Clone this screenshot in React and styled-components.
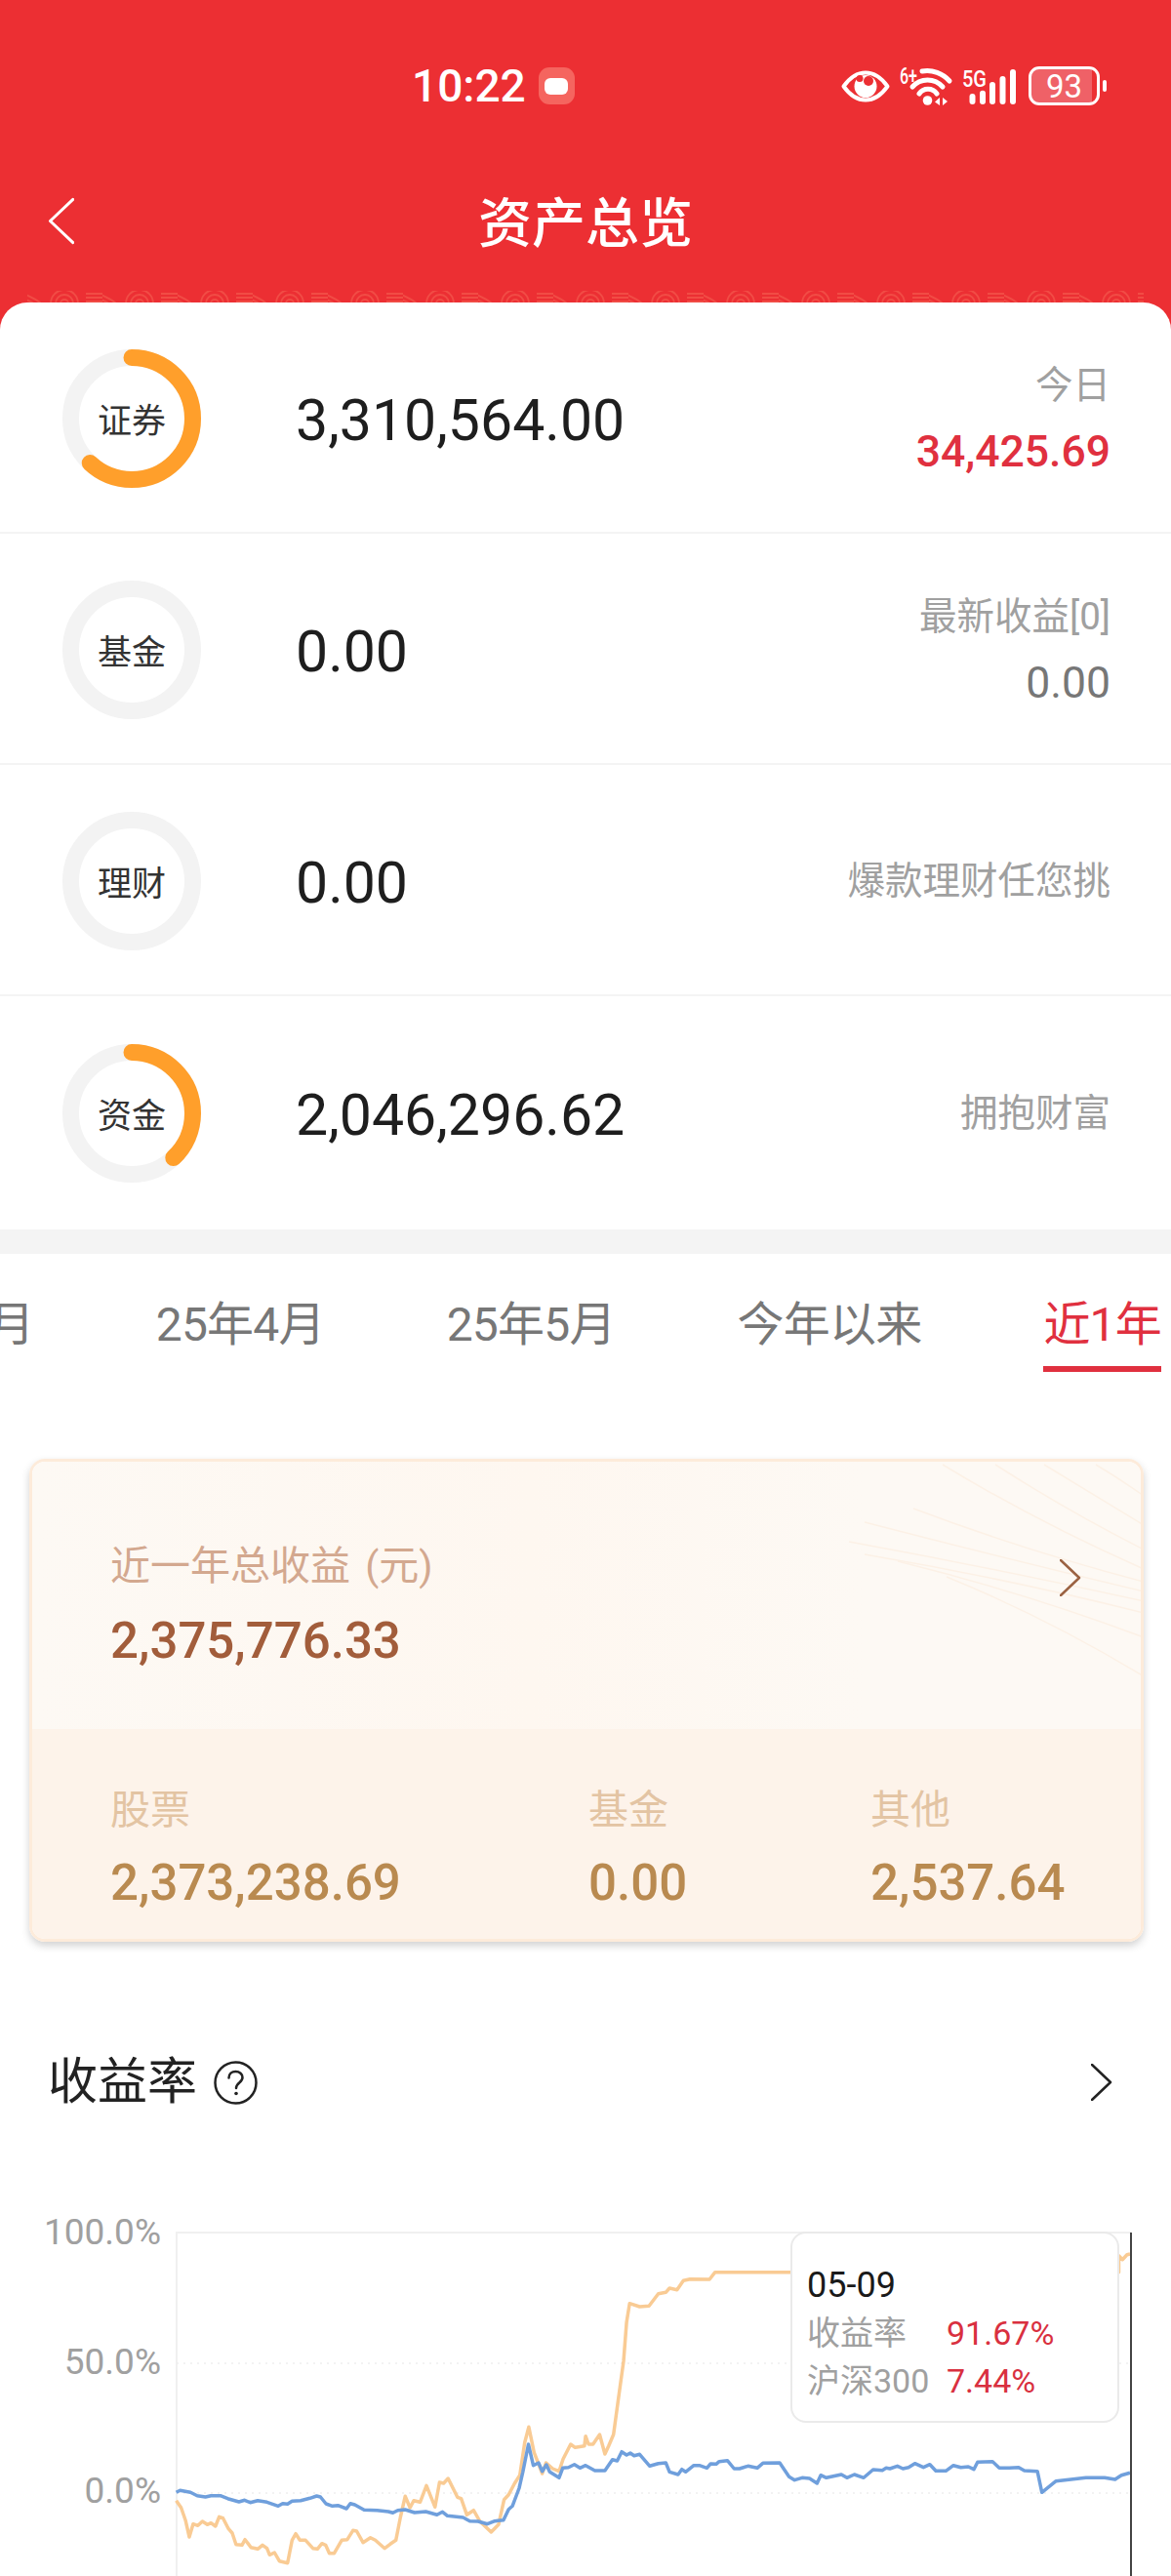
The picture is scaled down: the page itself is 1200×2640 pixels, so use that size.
import React from "react";
import styled, { createGlobalStyle } from "styled-components";

const FONT = `Roboto, "Noto Sans CJK SC", sans-serif`;

const ASSETS = [
  { name: "证券", value: "3,310,564.00", share: 62, label: "今日", amount: "34,425.69", up: true },
  { name: "基金", value: "0.00", share: 0, label: "最新收益[0]", amount: "0.00" },
  { name: "理财", value: "0.00", share: 0, label: "爆款理财任您挑" },
  { name: "资金", value: "2,046,296.62", share: 38, label: "拥抱财富" },
];

const TABS = ["25年3月", "25年4月", "25年5月", "今年以来", "近1年"];

const SPLITS = [
  { name: "股票", value: "2,373,238.69" },
  { name: "基金", value: "0.00" },
  { name: "其他", value: "2,537.64" },
];

const FAN_LINES = [
  "M1090 3Q1115 18 1139 35",
  "M1037 3Q1090 35 1139 65",
  "M987 3Q1060 50 1139 90",
  "M933 3Q1030 62 1139 110",
  "M903 48Q1020 92 1139 123",
  "M853 62Q1000 100 1139 133",
  "M837 82Q990 110 1139 143",
  "M853 95Q1000 120 1139 155",
  "M887 102Q1020 135 1139 180",
  "M937 118Q1040 160 1139 220",
];

// traced in zoom space: left half is 2.613x from x=0, right half 2.613x from x=600, y is 3x from 2220
const fromLeft = (pts) => pts.map(([x, y]) => `${(x / 2.613).toFixed(1)},${(2220 + y / 3).toFixed(1)}`);
const fromRight = (pts) => pts.map(([x, y]) => `${(600 + x / 2.613).toFixed(1)},${(2220 + y / 3).toFixed(1)}`);

const BLUE_LINE = [
  ...fromLeft([
    [472, 1003], [482, 997], [510, 1003], [528, 1013], [550, 1017], [565, 1013], [590, 1013], [610, 1022],
    [640, 1032], [655, 1027], [670, 1034], [690, 1028], [715, 1033], [745, 1045], [757, 1037], [770, 1039],
    [782, 1030], [805, 1028], [830, 1021], [848, 1014], [858, 1017], [873, 1038], [890, 1045], [905, 1043],
    [928, 1053], [938, 1037], [950, 1041], [975, 1057], [1010, 1058], [1040, 1062], [1052, 1066], [1065, 1058],
    [1085, 1056], [1110, 1065], [1140, 1062], [1170, 1072], [1185, 1063], [1198, 1075], [1240, 1080], [1258, 1091],
    [1280, 1092], [1305, 1100], [1325, 1091], [1348, 1088], [1362, 1055], [1372, 1045], [1390, 990], [1400, 940],
    [1415, 855], [1428, 920], [1442, 912], [1452, 938], [1463, 918], [1472, 940], [1497, 958], [1507, 928],
    [1522, 926], [1538, 917], [1553, 928], [1568, 920],
  ]),
  ...fromRight([
    [25, 936], [52, 936], [72, 902], [85, 906], [97, 878], [110, 888], [120, 882], [130, 890], [145, 886],
    [172, 922], [195, 914], [215, 912], [225, 940], [248, 948], [258, 932], [268, 940], [290, 920], [305, 920],
    [325, 928], [335, 915], [350, 916], [358, 908], [380, 905], [398, 930], [412, 930], [435, 922], [460, 928],
    [475, 913], [520, 912], [545, 955], [560, 965], [580, 958], [600, 960], [620, 975], [630, 950], [645, 958],
    [685, 948], [700, 958], [720, 948], [745, 958], [770, 933], [795, 935], [805, 928], [815, 930], [835, 922],
    [850, 930], [865, 926], [882, 914], [905, 926], [922, 917], [938, 937], [965, 937], [985, 920], [1005, 926],
    [1025, 924], [1040, 932], [1050, 910], [1090, 908], [1108, 928], [1135, 928], [1160, 926], [1175, 936],
    [1210, 938], [1222, 1003], [1260, 968], [1300, 963], [1340, 958], [1390, 958], [1418, 963], [1435, 950], [1458, 943],
  ]),
].join(" ");

const ORANGE_LINE = [
  ...fromLeft([
    [472, 1028], [485, 1050], [497, 1090], [507, 1140], [517, 1100], [530, 1105], [542, 1092], [555, 1102],
    [565, 1097], [577, 1107], [587, 1078], [597, 1082], [612, 1115], [622, 1128], [632, 1163], [648, 1165],
    [656, 1148], [672, 1172], [690, 1177], [703, 1165], [715, 1175], [722, 1195], [735, 1188], [748, 1214],
    [770, 1220], [782, 1150], [792, 1130], [803, 1150], [818, 1150], [838, 1175], [850, 1177], [862, 1160],
    [872, 1165], [882, 1190], [895, 1190], [915, 1150], [930, 1148], [945, 1120], [955, 1122], [972, 1157],
    [992, 1142], [1005, 1150], [1030, 1175], [1045, 1162], [1060, 1150], [1072, 1080], [1085, 1015], [1098, 1050],
    [1108, 1028], [1125, 1033], [1142, 982], [1165, 1048], [1177, 972], [1188, 975], [1200, 960], [1225, 1018],
    [1235, 1022], [1250, 1072], [1268, 1058], [1285, 1092], [1315, 1125], [1335, 1102], [1350, 1025], [1362, 1010],
    [1378, 975], [1392, 950], [1405, 850], [1416, 802], [1430, 880], [1452, 945], [1462, 912], [1480, 930],
    [1497, 938], [1508, 900], [1528, 855], [1540, 865], [1565, 860], [1568, 830],
  ]),
  ...fromRight([
    [8, 855], [20, 855], [38, 825], [52, 885], [62, 860], [75, 825], [90, 700], [102, 600], [110, 480], [118, 422],
    [145, 432], [170, 430], [195, 392], [215, 388], [225, 375], [245, 380], [262, 352], [280, 347], [332, 348],
    [347, 326], [1428, 326], [1428, 275], [1438, 287], [1450, 272], [1458, 270],
  ]),
].join(" ");

const Ring = ({ name, share }) => (
  <StyledRing>
    <svg width="142" height="142" viewBox="0 0 142 142">
      <circle cx="71" cy="71" r="62.5" fill="none" stroke="#F3F3F3" strokeWidth="17" />
      {share > 0 && (
        <circle
          cx="71"
          cy="71"
          r="62.5"
          fill="none"
          stroke="#FF9F2B"
          strokeWidth="17"
          strokeLinecap="round"
          pathLength="100"
          strokeDasharray={`${share} 100`}
          transform="rotate(-90 71 71)"
        />
      )}
    </svg>
    <StyledRingName>{name}</StyledRingName>
  </StyledRing>
);

const Chevron = ({ left, color, width = 22, height = 38, stroke = 3 }) => (
  <svg width={width} height={height} viewBox="0 0 22 38" fill="none">
    <path
      d={left ? "M21 1L2 19l19 18" : "M1 1l19 18L1 37"}
      stroke={color}
      strokeWidth={stroke}
      strokeLinecap="round"
      strokeLinejoin="round"
      vectorEffect="non-scaling-stroke"
    />
  </svg>
);

const EyeIcon = () => (
  <svg width="50" height="33" viewBox="0 0 50 33">
    <path
      d="M2.5 16.5C10 6 18 2.5 25 2.5S40 6 47.5 16.5C40 27 32 30.5 25 30.5S10 27 2.5 16.5Z"
      fill="none"
      stroke="#fff"
      strokeWidth="4"
      strokeLinejoin="round"
    />
    <circle cx="25" cy="16.5" r="11.5" fill="#fff" />
    <circle cx="28" cy="11" r="5" fill="#EC2F33" />
    <circle cx="19" cy="8.5" r="3.5" fill="#EC2F33" />
  </svg>
);

const NetworkIcon = () => (
  <svg width="125" height="50" viewBox="0 0 125 50" fill="#fff">
    <StyledNetText x="2" y="23" fontSize="23" textLength="18" lengthAdjust="spacingAndGlyphs">
      6+
    </StyledNetText>
    <StyledNetText x="66" y="26" fontSize="24" textLength="25" lengthAdjust="spacingAndGlyphs">
      5G
    </StyledNetText>
    <g fill="none" stroke="#fff" strokeWidth="5" strokeLinecap="round">
      <path d="M25 10A30.4 30.4 0 0 1 53 20" />
      <path d="M15 26A20.5 20.5 0 0 1 46 26" />
      <path d="M22 33A11 11 0 0 1 40 33" />
    </g>
    <circle cx="30.5" cy="40" r="4.8" />
    <path d="M38 41.5L43 37V45ZM46 37L51 41L46 45Z" />
    <rect x="73.5" y="33" width="6" height="11" rx="3" />
    <rect x="84" y="29.7" width="6" height="14.3" rx="3" />
    <rect x="94" y="21" width="6" height="23" rx="3" />
    <rect x="104.5" y="15" width="6" height="29" rx="3" />
    <rect x="115" y="8" width="6" height="36" rx="3" />
  </svg>
);

const HelpIcon = () => (
  <svg width="45" height="45" viewBox="0 0 45 45" fill="none">
    <circle cx="22.5" cy="22.5" r="21" stroke="#222" strokeWidth="2.5" />
    <path
      d="M15.5 17.5c0-4 3-6.5 7-6.5s7 2.600 7 6c0 5.500-6.500 5.500-6.500 11"
      stroke="#222"
      strokeWidth="2.5"
      strokeLinecap="round"
    />
    <circle cx="23" cy="33.500" r="1.800" fill="#222" />
  </svg>
);

const PatternStrip = () => (
  <StyledStrip width="1144" height="12" viewBox="0 0 1144 12">
    <defs>
      <pattern id="cloud" width="77" height="24" patternUnits="userSpaceOnUse">
        <g fill="none" stroke="#F14C45" strokeWidth="1.8">
          <circle cx="38" cy="13" r="4" />
          <circle cx="38" cy="13" r="9" />
          <circle cx="38" cy="13" r="14" />
          <path d="M-2 4Q8 8 14 13M-2 9Q4 11 8 14M60 3H78M60 7H78M60 11H78" />
        </g>
      </pattern>
    </defs>
    <rect width="1144" height="12" fill="url(#cloud)" />
  </StyledStrip>
);

const App = () => (
  <StyledPage>
    <GlobalStyle />
    <StyledHeader>
      <StyledStatusBar>
        <StyledTime>10:22</StyledTime>
        <StyledRecBadge>
          <StyledRecDot />
        </StyledRecBadge>
        <StyledStatusIcons>
          <EyeIcon />
          <NetworkIcon />
          <StyledBattery>93</StyledBattery>
          <StyledBatteryNub />
        </StyledStatusIcons>
      </StyledStatusBar>
      <StyledNav>
        <Chevron left color="#fff" width={27} height={53} stroke={3} />
        <StyledTitle>资产总览</StyledTitle>
      </StyledNav>
      <PatternStrip />
    </StyledHeader>

    <StyledAssetList>
      {ASSETS.map((asset) => (
        <StyledAssetRow key={asset.name}>
          <Ring name={asset.name} share={asset.share} />
          <StyledAssetValue>{asset.value}</StyledAssetValue>
          <StyledAssetSide>
            <StyledSideLabel>{asset.label}</StyledSideLabel>
            {asset.amount && <StyledSideAmount $up={asset.up}>{asset.amount}</StyledSideAmount>}
          </StyledAssetSide>
        </StyledAssetRow>
      ))}
    </StyledAssetList>
    <StyledBand />

    <StyledTabs>
      {TABS.map((tab, i) => (
        <StyledTab key={tab} $active={i === TABS.length - 1}>
          {tab}
        </StyledTab>
      ))}
    </StyledTabs>

    <StyledProfitCard>
      <StyledProfitTop>
        <StyledFan viewBox="0 0 1136 272" width="1136" height="272" fill="none">
          {FAN_LINES.map((d) => (
            <path key={d} d={d} stroke="#FCF1E6" strokeWidth="1.5" />
          ))}
        </StyledFan>
        <StyledProfitHead>
          <StyledProfitLabel>近一年总收益 (元)</StyledProfitLabel>
          <StyledProfitValue>2,375,776.33</StyledProfitValue>
        </StyledProfitHead>
        <StyledProfitArrow>
          <Chevron color="#9B6242" stroke={2.5} />
        </StyledProfitArrow>
      </StyledProfitTop>
      <StyledProfitSplit>
        {SPLITS.map((item) => (
          <div key={item.name}>
            <StyledSplitLabel>{item.name}</StyledSplitLabel>
            <StyledSplitValue>{item.value}</StyledSplitValue>
          </div>
        ))}
      </StyledProfitSplit>
    </StyledProfitCard>

    <StyledSectionHead>
      <StyledSectionTitle>收益率</StyledSectionTitle>
      <HelpIcon />
      <StyledSectionArrow>
        <Chevron color="#222" stroke={2.5} />
      </StyledSectionArrow>
    </StyledSectionHead>

    <StyledChart>
      <svg width="1200" height="471" viewBox="0 2169 1200 471" fill="none">
        <path d="M181 2640V2288H1159" stroke="#F0F0F0" strokeWidth="2" />
        <path d="M181 2422H1159M181 2555H1159" stroke="#EEE" strokeWidth="1.500" strokeDasharray="2 5" />
        <StyledAxisText x="165" y="2300">100.0%</StyledAxisText>
        <StyledAxisText x="165" y="2433">50.0%</StyledAxisText>
        <StyledAxisText x="165" y="2565">0.0%</StyledAxisText>
        <polyline points={ORANGE_LINE} stroke="#F9CB94" strokeWidth="3.5" strokeLinejoin="round" />
        <polyline points={BLUE_LINE} stroke="#6F9FDC" strokeWidth="3.5" strokeLinejoin="round" />
        <path d="M1159 2288V2640" stroke="#444" strokeWidth="2" />
      </svg>
      <StyledTooltip>
        <StyledTipDate>05-09</StyledTipDate>
        <StyledTipRow>
          <StyledTipName>收益率</StyledTipName>
          <StyledTipValue>91.67%</StyledTipValue>
        </StyledTipRow>
        <StyledTipRow>
          <StyledTipName>沪深300</StyledTipName>
          <StyledTipValue>7.44%</StyledTipValue>
        </StyledTipRow>
      </StyledTooltip>
    </StyledChart>
  </StyledPage>
);

export default App;

const GlobalStyle = createGlobalStyle`
  body {
    margin: 0;
    background: #fff;
    font-family: ${FONT};
  }
`;

const StyledPage = styled.div`
  width: 1200px;
  height: 2640px;
  overflow: hidden;
  background: #fff;
`;

const StyledHeader = styled.header`
  display: flex;
  flex-direction: column;
  height: 340px;
  padding-top: 60px;
  box-sizing: border-box;
  background: #ec2f33;
  color: #fff;
`;

const StyledStatusBar = styled.div`
  display: flex;
  align-items: center;
  height: 56px;
  padding: 0 66px 0 422px;
`;

const StyledTime = styled.span`
  font-size: 46px;
  font-weight: 500;
  line-height: 56px;
`;

const StyledRecBadge = styled.span`
  display: flex;
  align-items: center;
  justify-content: center;
  width: 37px;
  height: 38px;
  margin-left: 13px;
  border-radius: 11px;
  background: #f5655f;
`;

const StyledRecDot = styled.span`
  width: 24px;
  height: 17px;
  border-radius: 6px;
  background: #fff;
`;

const StyledStatusIcons = styled.div`
  display: flex;
  align-items: center;
  gap: 8px;
  margin-left: auto;
`;

const StyledNetText = styled.text`
  font-family: Roboto, sans-serif;
  font-weight: 500;
`;

const StyledBattery = styled.div`
  display: flex;
  align-items: center;
  justify-content: center;
  width: 73px;
  height: 40px;
  margin-left: 1px;
  box-sizing: border-box;
  border: 3px solid #fff;
  border-radius: 11px;
  background: linear-gradient(90deg, #ef6167 93%, transparent 93%);
  font-size: 33px;
  line-height: 1;
`;

const StyledBatteryNub = styled.span`
  width: 4px;
  height: 12px;
  margin-left: -5px;
  border-radius: 2px;
  background: #fff;
`;

const StyledNav = styled.div`
  position: relative;
  display: flex;
  align-items: center;
  height: 70px;
  margin-top: 75px;
  padding-left: 49px;
`;

const StyledTitle = styled.h1`
  position: absolute;
  left: 0;
  right: 0;
  top: 3px;
  margin: 0;
  font-size: 55px;
  font-weight: 500;
  line-height: 70px;
  text-align: center;
`;

const StyledStrip = styled.svg`
  display: block;
  margin: 37px 0 0 28px;
`;

const StyledAssetList = styled.section`
  margin-top: -30px;
  border-radius: 28px 28px 0 0;
  background: #fff;
`;

const StyledAssetRow = styled.div`
  display: flex;
  align-items: center;
  height: 237px;
  padding: 2px 62px 0 64px;
  box-sizing: border-box;
  border-bottom: 2px solid #f4f4f4;

  &:last-child {
    height: 239px;
    padding-top: 0;
    border-bottom: none;
  }
`;

const StyledRing = styled.div`
  display: grid;
  place-items: center;
  width: 142px;
  height: 142px;
  flex-shrink: 0;

  > * {
    grid-area: 1 / 1;
  }
`;

const StyledRingName = styled.span`
  font-size: 35px;
  color: #333;
`;

const StyledAssetValue = styled.div`
  margin: 4px 0 0 97px;
  font-size: 59px;
  color: #1e1e1e;
`;

const StyledAssetSide = styled.div`
  margin-left: auto;
  text-align: right;
`;

const StyledSideLabel = styled.div`
  font-size: 38.5px;
  line-height: 69px;
  color: #a0a0a0;
`;

const StyledSideAmount = styled.div`
  font-size: 44.5px;
  font-weight: ${({ $up }) => ($up ? 500 : 400)};
  line-height: 69px;
  color: ${({ $up }) => ($up ? "#E0303F" : "#777")};
`;

const StyledBand = styled.div`
  height: 25px;
  background: #f4f4f4;
`;

const StyledTabs = styled.nav`
  display: flex;
  justify-content: flex-end;
  gap: 125px;
  padding: 40px 10px 16px 0;
  overflow: hidden;
`;

const StyledTab = styled.span`
  position: relative;
  flex-shrink: 0;
  font-size: 48px;
  letter-spacing: -0.8px;
  line-height: 66px;
  white-space: nowrap;
  color: ${({ $active }) => ($active ? "#E0303F" : "#777")};

  ${({ $active }) =>
    $active &&
    `&::after {
      content: "";
      position: absolute;
      left: 0;
      right: 0;
      bottom: -15px;
      height: 6px;
      background: #E0303F;
    }`}
`;

const StyledProfitCard = styled.section`
  display: flex;
  flex-direction: column;
  width: 1142px;
  height: 495px;
  margin: 88px 0 0 30px;
  box-sizing: border-box;
  overflow: hidden;
  border: 3px solid #fdebda;
  border-radius: 16px;
  box-shadow: 0 4px 9px rgba(0, 0, 0, 0.18);
`;

const StyledProfitTop = styled.div`
  position: relative;
  display: flex;
  justify-content: space-between;
  height: 274px;
  padding: 77px 61px 0 80px;
  box-sizing: border-box;
  background: linear-gradient(90deg, #fdf9f4 0%, #fef7f0 45%, #fdf9f4 75%);
`;

const StyledFan = styled.svg`
  position: absolute;
  left: 0;
  top: 0;
`;

const StyledProfitHead = styled.div`
  position: relative;
`;

const StyledProfitLabel = styled.div`
  font-size: 41px;
  word-spacing: 5px;
  line-height: 60px;
  color: #d3a88f;
`;

const StyledProfitValue = styled.div`
  margin-top: 15px;
  font-size: 51px;
  font-weight: 500;
  line-height: 64px;
  color: #a25d3b;
`;

const StyledProfitArrow = styled.div`
  position: relative;
  margin-top: 23px;
`;

const StyledProfitSplit = styled.div`
  display: grid;
  grid-template-columns: 490px 289px 1fr;
  flex: 1;
  padding: 53px 0 0 80px;
  background: #fdf3ea;
`;

const StyledSplitLabel = styled.div`
  font-size: 41px;
  line-height: 60px;
  color: #e3c4a3;
`;

const StyledSplitValue = styled.div`
  margin-top: 13px;
  font-size: 51px;
  font-weight: 500;
  line-height: 64px;
  color: #b98a50;
`;

const StyledSectionHead = styled.div`
  display: flex;
  align-items: center;
  gap: 17px;
  height: 70px;
  margin-top: 109px;
  padding: 0 60px 0 49px;
`;

const StyledSectionTitle = styled.h2`
  margin: 0;
  font-size: 51px;
  font-weight: 400;
  line-height: 70px;
  color: #222;
`;

const StyledSectionArrow = styled.div`
  display: flex;
  margin-left: auto;
`;

const StyledChart = styled.div`
  position: relative;
  height: 471px;

  > svg {
    display: block;
  }
`;

const StyledAxisText = styled.text`
  font-family: ${FONT};
  font-size: 37px;
  text-anchor: end;
  fill: #a0a0a0;
`;

const StyledTooltip = styled.div`
  position: absolute;
  left: 810px;
  top: 118px;
  width: 337px;
  height: 196px;
  padding: 29px 0 0 15px;
  box-sizing: border-box;
  border: 2px solid #eaeaea;
  border-radius: 16px;
  background: #fff;
`;

const StyledTipDate = styled.div`
  font-size: 36px;
  line-height: 49px;
  color: #1a1a1a;
`;

const StyledTipRow = styled.div`
  display: grid;
  grid-template-columns: 143px 1fr;
  font-size: 34px;
  line-height: 49px;
`;

const StyledTipName = styled.span`
  white-space: nowrap;
  color: #a0a0a0;
`;

const StyledTipValue = styled.span`
  color: #d9303f;
`;
